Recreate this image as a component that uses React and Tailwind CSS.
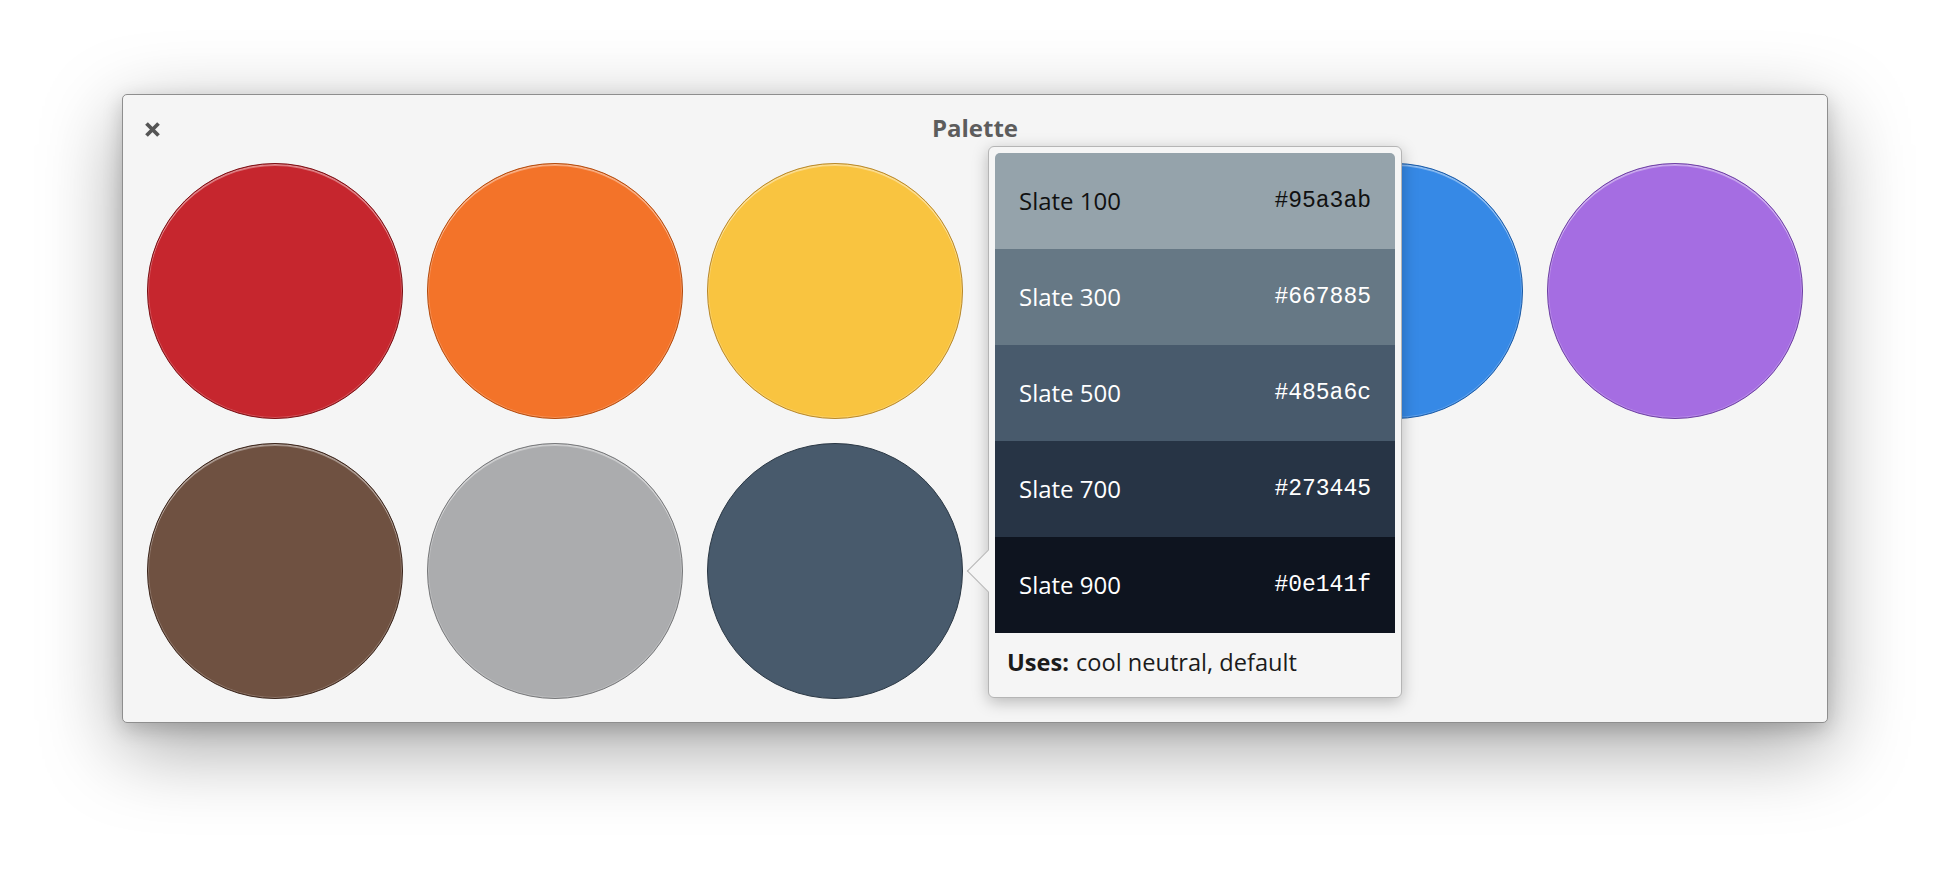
import React from "react";

const row1 = [
  { bg: "bg-[#c6262e]", border: "border-[#7a0d12]" },
  { bg: "bg-[#f37329]", border: "border-[#b34a0c]" },
  { bg: "bg-[#f9c440]", border: "border-[#b8882a]" },
  null,
  { bg: "bg-[#3689e6]", border: "border-[#1a5aa6]" },
  { bg: "bg-[#a56de2]", border: "border-[#6d3fa3]" },
];
const row2 = [
  { bg: "bg-[#6f5141]", border: "border-[#3a241a]" },
  { bg: "bg-[#abacae]", border: "border-[#767779]" },
  { bg: "bg-[#485a6c]", border: "border-[#2a3744]", selected: true },
  null,
  null,
  null,
];

const swatches = [
  { name: "Slate 100", hex: "#95a3ab", bg: "bg-[#95a3ab]", text: "text-[#111111]", extra: "rounded-t-[5px]" },
  { name: "Slate 300", hex: "#667885", bg: "bg-[#667885]", text: "text-white", extra: "" },
  { name: "Slate 500", hex: "#485a6c", bg: "bg-[#485a6c]", text: "text-white", extra: "" },
  { name: "Slate 700", hex: "#273445", bg: "bg-[#273445]", text: "text-white", extra: "" },
  { name: "Slate 900", hex: "#0e141f", bg: "bg-[#0e141f]", text: "text-white", extra: "" },
];

function Circle({ c }) {
  if (!c) return <div className="w-[256px] h-[256px]" />;
  return (
    <div
      className={`w-[256px] h-[256px] rounded-full border-[1.5px] ${c.bg} ${c.border} ${
        c.selected
          ? ""
          : "shadow-[inset_0_2px_0_rgba(255,255,255,0.35),inset_0_0_0_1px_rgba(255,255,255,0.2)]"
      }`}
    />
  );
}

export default function App() {
  return (
    <div className="w-full h-[874px] bg-white flex justify-center pt-[94px] font-['Open_Sans',sans-serif]">
      <div className="relative w-[1706px] h-[629px] bg-[#f5f5f5] border border-[#8e8e8e] rounded-[5px] shadow-[0_24px_80px_rgba(0,0,0,0.36),0_6px_20px_rgba(0,0,0,0.18)] px-6 pb-[23px] flex flex-col">
        <div className="relative h-[68px] flex items-center justify-center">
          <button className="absolute left-[-3px] top-[26px] w-[17px] h-[17px] flex items-center justify-center">
            <svg width="17" height="17" viewBox="0 0 17 17">
              <path d="M2.5 2.5 L14.5 14.5 M14.5 2.5 L2.5 14.5" stroke="#555555" strokeWidth="3.8" strokeLinecap="butt" />
            </svg>
          </button>
          <div className="text-[24px] font-bold text-[#5d5d5d] leading-none pb-[3px]">Palette</div>
        </div>
        <div className="grid grid-cols-[repeat(6,256px)] gap-6">
          {row1.map((c, i) => (
            <Circle key={"a" + i} c={c} />
          ))}
          {row2.map((c, i) => (
            <Circle key={"b" + i} c={c} />
          ))}
        </div>

        <div className="absolute left-[865px] top-[51px] w-[414px] h-[552px] bg-[#f5f5f5] border border-[#b5b5b5] rounded-[6px] shadow-[0_4px_16px_rgba(0,0,0,0.25)] p-[6px] flex flex-col">
          <div className="absolute left-[-16px] top-[409px] w-[30px] h-[30px] rotate-45 bg-[#f5f5f5] border-l border-b border-[#b5b5b5]" />
          <div className="relative flex flex-col">
            {swatches.map((s) => (
              <div
                key={s.name}
                className={`h-[96px] flex items-center justify-between px-6 ${s.bg} ${s.text} ${s.extra}`}
              >
                <span className="text-[24px] leading-none">{s.name}</span>
                <span className="text-[23px] leading-none font-['Liberation_Mono',monospace]">{s.hex}</span>
              </div>
            ))}
          </div>
          <div className="relative flex-1 flex items-center px-3 pt-[2px] text-[23.6px] text-[#1b1b1b]">
            <span className="font-bold">Uses:</span>
            <span className="ml-[7px]">cool neutral, default</span>
          </div>
        </div>
      </div>
    </div>
  );
}
